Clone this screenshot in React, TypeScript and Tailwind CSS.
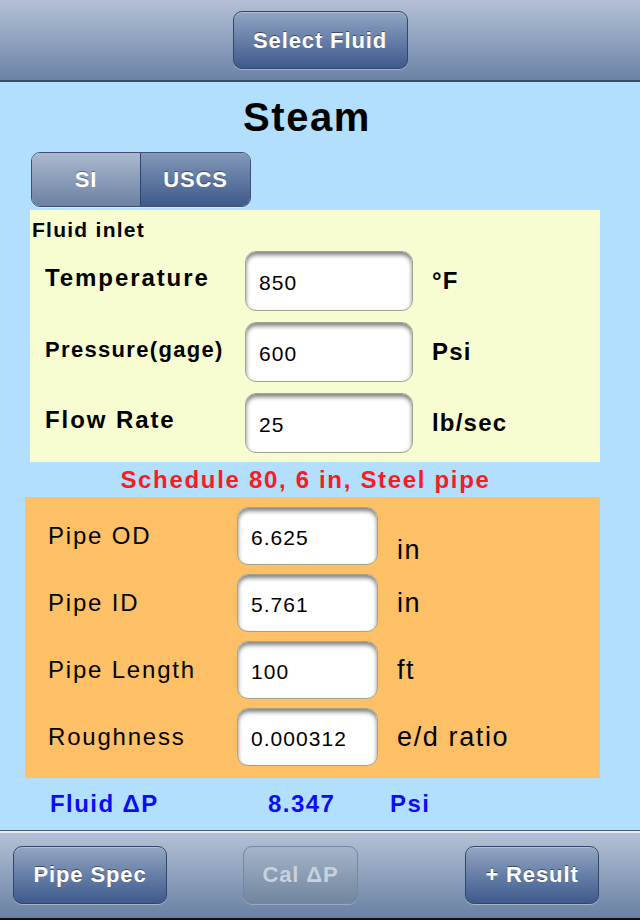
import React from "react";

type Row = { label: string; value: string; unit: string; labelClass?: string; unitClass?: string };

const inletRows: Row[] = [
  { label: "Temperature", value: "850", unit: "°F", labelClass: "text-[24px] tracking-[0.08em]" },
  { label: "Pressure(gage)", value: "600", unit: "Psi", labelClass: "text-[22px] tracking-[0.06em]" },
  { label: "Flow Rate", value: "25", unit: "lb/sec", labelClass: "text-[24px] tracking-[0.08em]" },
];

const pipeRows: Row[] = [
  { label: "Pipe OD", value: "6.625", unit: "in", unitClass: "pt-[28px]" },
  { label: "Pipe ID", value: "5.761", unit: "in" },
  { label: "Pipe Length", value: "100", unit: "ft" },
  { label: "Roughness", value: "0.000312", unit: "e/d ratio" },
];

const BarButton = ({ children, className = "", disabled = false }: { children: React.ReactNode; className?: string; disabled?: boolean }) => (
  <button
    disabled={disabled}
    className={
      "h-[58px] rounded-[9px] border text-[22px] font-bold tracking-[0.04em] " +
      (disabled
        ? "border-[#7587a5] bg-gradient-to-b from-[#a6b4ca] to-[#71869f] text-[#c9d1dd] shadow-[0_1px_0_rgba(255,255,255,0.25)] "
        : "border-[#33466b] bg-gradient-to-b from-[#93a5c2] to-[#3d5a8b] text-white shadow-[0_1px_0_rgba(255,255,255,0.35),inset_0_1px_0_rgba(255,255,255,0.3)] [text-shadow:0_-1px_0_rgba(0,0,0,0.45)] ") +
      className
    }
  >
    {children}
  </button>
);

const Field = ({ value, className }: { value: string; className: string }) => (
  <input
    readOnly
    value={value}
    className={
      "rounded-[11px] border border-[#a3a38e] bg-white pl-[13px] pt-[3px] text-[21px] tracking-[0.05em] text-black outline-none shadow-[inset_0_3px_4px_rgba(0,0,0,0.5)] font-['Liberation_Sans',Arial,sans-serif] " +
      className
    }
  />
);

export default function App() {
  return (
    <div className="w-[640px] h-[920px] flex flex-col bg-[#b2dffe] font-['Liberation_Sans',Arial,sans-serif] overflow-hidden">
      {/* top toolbar */}
      <div className="h-[82px] shrink-0 flex items-center justify-center bg-gradient-to-b from-[#b4c1d6] to-[#6c83a6] border-b-2 border-[#3b4c68]">
        <BarButton className="w-[175px]">Select Fluid</BarButton>
      </div>

      <main className="flex-1 flex flex-col">
        <h1 className="h-[70px] pr-[26px] flex items-center justify-center text-[40px] font-bold tracking-[0.04em] text-black">Steam</h1>

        {/* unit segment */}
        <div className="ml-[31px] w-[220px] h-[55px] flex rounded-[9px] border border-[#3e5073] overflow-hidden text-[22px] font-bold tracking-[0.04em] text-white [text-shadow:0_-1px_0_rgba(0,0,0,0.4)] shadow-[0_1px_0_rgba(255,255,255,0.4)]">
          <div className="w-[109px] flex items-center justify-center bg-gradient-to-b from-[#acb9ce] to-[#6b81a3] border-r border-[#30436a]">SI</div>
          <div className="flex-1 flex items-center justify-center bg-gradient-to-b from-[#8599b8] to-[#3d5a8b]">USCS</div>
        </div>

        {/* fluid inlet panel */}
        <section className="mt-[3px] ml-[30px] w-[570px] h-[252px] bg-[#f7fdd0] pt-[7px]">
          <div className="pl-[2px] text-[21px] font-bold tracking-[0.06em] text-black leading-[26px]">Fluid inlet</div>
          <div className="mt-[8px] flex flex-col gap-[11px]">
            {inletRows.map((r) => (
              <div key={r.label} className="h-[60px] flex items-center">
                <div className={"w-[215px] pl-[15px] pb-[6px] font-bold text-black " + r.labelClass}>{r.label}</div>
                <Field value={r.value} className="w-[168px] h-[60px]" />
                <div className="ml-[19px] text-[24px] font-bold tracking-[0.05em] text-black">{r.unit}</div>
              </div>
            ))}
          </div>
        </section>

        <div className="h-[35px] pr-[29px] flex items-center justify-center text-[24px] font-bold tracking-[0.07em] text-[#fc1a1f]">
          Schedule 80, 6 in, Steel pipe
        </div>

        {/* pipe panel */}
        <section className="ml-[25px] w-[575px] h-[281px] bg-[#fdc066] pt-[10px] flex flex-col gap-[9px]">
          {pipeRows.map((r) => (
            <div key={r.label} className="h-[58px] flex items-center">
              <div className="w-[212px] pl-[23px] text-[24px] tracking-[0.075em] text-black">{r.label}</div>
              <Field value={r.value} className="w-[141px] h-[58px]" />
              <div className={"ml-[19px] text-[27px] tracking-[0.06em] text-black " + (r.unitClass ?? "")}>{r.unit}</div>
            </div>
          ))}
        </section>

        {/* result line */}
        <div className="flex-1 flex items-center text-[24px] font-bold tracking-[0.06em] text-[#0d0df3]">
          <span className="ml-[50px] w-[218px]">Fluid ΔP</span>
          <span className="w-[122px]">8.347</span>
          <span>Psi</span>
        </div>
      </main>

      {/* bottom toolbar */}
      <div className="h-[90px] shrink-0 flex items-center bg-gradient-to-b from-[#b6c3d7] to-[#6a81a3] border-t border-[#4a5b77] shadow-[inset_0_2px_0_#e4ebf3] border-b-2 border-b-[#111]">
        <BarButton className="ml-[13px] w-[154px]">Pipe Spec</BarButton>
        <BarButton disabled className="ml-[76px] w-[115px]">Cal ΔP</BarButton>
        <BarButton className="ml-[107px] w-[134px]">+ Result</BarButton>
      </div>
    </div>
  );
}
